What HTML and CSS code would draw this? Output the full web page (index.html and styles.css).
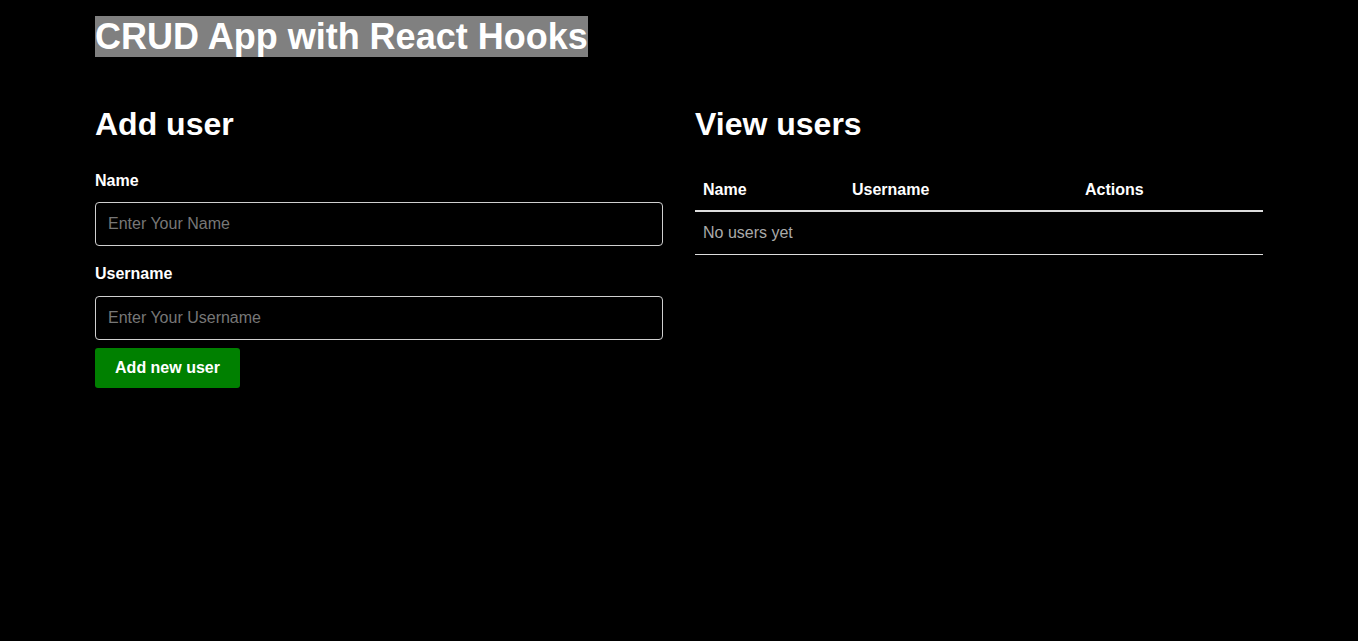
FILE: index.html
```html
<!DOCTYPE html>
<html lang="en">
<head>
<meta charset="utf-8">
<title>CRUD App with React Hooks</title>
<link rel="stylesheet" href="styles.css">
</head>
<body>
<div class="container">
  <h1 class="title"><span class="title-text">CRUD App with React Hooks</span></h1>
  <div class="row">
    <div class="col">
      <h2 class="heading">Add user</h2>
      <form class="form">
        <label class="label" for="name">Name</label>
        <input class="input" id="name" type="text" placeholder="Enter Your Name">
        <label class="label label-second" for="username">Username</label>
        <input class="input" id="username" type="text" placeholder="Enter Your Username">
        <button class="button" type="button">Add new user</button>
      </form>
    </div>
    <div class="col">
      <h2 class="heading">View users</h2>
      <table class="table">
        <thead>
          <tr>
            <th class="th-name">Name</th>
            <th class="th-username">Username</th>
            <th class="th-actions">Actions</th>
          </tr>
        </thead>
        <tbody>
          <tr>
            <td class="empty" colspan="3">No users yet</td>
          </tr>
        </tbody>
      </table>
    </div>
  </div>
</div>
</body>
</html>
```
FILE: styles.css
```css
html, body {
  margin: 0;
  padding: 0;
  background: #000;
  color: #fff;
  font-family: "Liberation Sans", Arial, sans-serif;
}

.container {
  width: 1168px;
  margin: 0 auto;
  padding-top: 16px;
  box-sizing: border-box;
}

.title {
  margin: 0;
  font-size: 36px;
  line-height: 41px;
  font-weight: 700;
}

.title-text {
  background: #808080;
  display: inline-block;
}

.row {
  display: flex;
  gap: 32px;
  margin-top: 49px;
}

.col {
  flex: 1 1 0;
  min-width: 0;
}

.heading {
  margin: 0;
  font-size: 32px;
  line-height: 37px;
  font-weight: 700;
}

.form {
  display: flex;
  flex-direction: column;
  align-items: flex-start;
  margin-top: 28px;
}

.label {
  font-size: 16px;
  line-height: 20px;
  font-weight: 700;
  margin-bottom: 11px;
}

.label-second {
  margin-top: 18px;
  margin-bottom: 12px;
}

.input {
  width: 100%;
  height: 44px;
  box-sizing: border-box;
  background: #000;
  color: #fff;
  border: 1px solid #d0d0d0;
  border-radius: 4px;
  padding: 0 12px;
  font-family: "Liberation Sans", Arial, sans-serif;
  font-size: 16px;
  outline: none;
}

.input::placeholder {
  color: #777;
}

.button {
  margin-top: 8px;
  width: 145px;
  height: 40px;
  background: #008000;
  color: #fff;
  border: none;
  border-radius: 3px;
  font-family: "Liberation Sans", Arial, sans-serif;
  font-size: 16px;
  font-weight: 700;
  padding: 0;
}

.table {
  width: 100%;
  margin-top: 25px;
  border-collapse: collapse;
  table-layout: fixed;
}

.table th {
  text-align: left;
  font-size: 16px;
  line-height: 18px;
  font-weight: 700;
  padding: 13px 8px 11px;
  border-bottom: 2px solid #ddd;
}

.th-name { width: 133px; }
.th-username { width: 217px; }

.table td {
  font-size: 16px;
  line-height: 18px;
  padding: 12px 8px;
  border-bottom: 1px solid #ddd;
}

.empty {
  color: #aaa;
}
```
